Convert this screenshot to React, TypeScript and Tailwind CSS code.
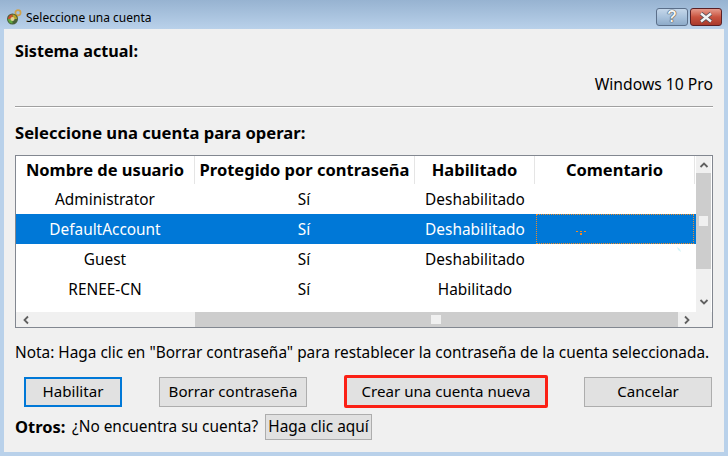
const rows = [
  { name: "Administrator", prot: "Sí", state: "Deshabilitado" },
  { name: "DefaultAccount", prot: "Sí", state: "Deshabilitado" },
  { name: "Guest", prot: "Sí", state: "Deshabilitado" },
  { name: "RENEE-CN", prot: "Sí", state: "Habilitado" }
];

function AppIcon() {
  return (
    <svg width="16" height="16" viewBox="0 0 16 16" className="shrink-0">
      <path d="M10.5 7 L10 11" stroke="#b98a34" strokeWidth="2" />
      <circle cx="12" cy="3.8" r="2.6" fill="none" stroke="#d0a24a" strokeWidth="1.7" />
      <circle cx="6.5" cy="10" r="5.5" fill="#47603a" />
      <path d="M6.5 5.5 A4.5 4.5 0 0 1 11 10 L6.5 10 Z" fill="#b9a22a" />
      <path d="M2 10 A4.5 4.5 0 0 1 6.5 5.5 L6.5 10 Z" fill="#c8502c" />
      <path d="M2 10 L6.5 10 L6.5 14.5 A4.5 4.5 0 0 1 2 10 Z" fill="#5fa83c" />
      <circle cx="6.5" cy="10" r="2" fill="#e0d49a" />
    </svg>
  );
}

function Chevron(props: { d: string }) {
  return (
    <svg width="10" height="10" viewBox="0 0 10 10">
      <path d={props.d} fill="none" stroke="#606060" strokeWidth="1.8" />
    </svg>
  );
}

function Btn(props: { label: string; className: string }) {
  return (
    <button className={"flex items-center justify-center whitespace-nowrap bg-[#e1e1e1] text-[15.1px] text-black " + props.className}>
      {props.label}
    </button>
  );
}

export default function App() {
  return (
    <div className="flex h-[456px] w-[728px] flex-col overflow-hidden bg-[#b9d1ea] bg-gradient-to-b from-[#97b3d1] to-[#b9d1ea] bg-[length:100%_29px] bg-no-repeat font-['Noto_Sans',sans-serif] text-black">
      <div className="flex h-[29px] shrink-0 pl-[6px] pr-[6px]">
        <div className="mt-[9px]">
          <AppIcon />
        </div>
        <span className="ml-[4px] mt-[9px] text-[12px] leading-[18px]">Seleccione una cuenta</span>
        <div className="ml-auto mt-[8px] flex gap-[2px]">
          <div className="flex h-[18px] w-[32px] items-center justify-center rounded-[3px] border border-[#5b6f8a] bg-gradient-to-b from-[#c5d7ea] via-[#a9c2dc] to-[#8eabc9] font-['Liberation_Sans',sans-serif] text-[16px] font-bold leading-none text-[#f4f4f4] [text-shadow:0_0_1px_#222,0_0_1px_#222]">
            ?
          </div>
          <div className="flex h-[18px] w-[32px] items-center justify-center rounded-[3px] border border-[#5a1f24] bg-gradient-to-b from-[#e59a8c] via-[#c9533f] to-[#a93a2c]">
            <svg width="16" height="11" viewBox="0 0 16 11">
              <path d="M3 1.5 L13 9.5 M13 1.5 L3 9.5" stroke="#4a4a55" strokeWidth="4" />
              <path d="M3 1.5 L13 9.5 M13 1.5 L3 9.5" stroke="#f2f2f2" strokeWidth="2.4" />
            </svg>
          </div>
        </div>
      </div>

      <div className="mx-[4px] mb-[4px] flex flex-1 flex-col bg-[#f0f0f0] pl-[11px] pr-[11px]">
        <div className="mt-[11px] text-[16.2px] font-bold leading-[22px]">Sistema actual:</div>
        <div className="mt-[11px] text-right text-[15.7px] leading-[22px]">Windows 10 Pro</div>
        <div className="mt-[11px] h-[2px] border-t border-b border-t-[#a0a0a0] border-b-white" />
        <div className="mt-[14px] text-[16.6px] font-bold leading-[22px]">Seleccione una cuenta para operar:</div>

        <div className="mt-[11px] flex h-[173px] flex-col border border-[#828790] bg-white">
          <div className="flex h-[156px]">
            <div className="w-[680px]">
              <div className="flex h-[28px] text-[16.5px] font-bold">
                <div className="flex w-[179px] items-center justify-center border-r border-[#e5e5e5]">Nombre de usuario</div>
                <div className="flex w-[220px] items-center justify-center whitespace-nowrap border-r border-[#e5e5e5]">Protegido por contraseña</div>
                <div className="flex w-[120px] items-center justify-center border-r border-[#e5e5e5]">Habilitado</div>
                <div className="flex w-[160px] items-center justify-center border-r border-[#e5e5e5]">Comentario</div>
              </div>
              {rows.map((r, i) => (
                <div key={r.name} className={i === 1 ? "flex h-[30px] bg-[#0078d7] text-[15.4px] text-white" : "flex h-[30px] text-[15.4px]"}>
                  <div className="flex w-[178px] items-center justify-center pt-[2px]">{r.name}</div>
                  <div className="flex w-[220px] items-center justify-center pt-[2px]">{r.prot}</div>
                  <div className="flex w-[122px] items-center justify-center pt-[2px]">{r.state}</div>
                  <div className="flex w-[158px]">
                    {i === 1 && (
                      <div className="flex h-full w-full items-center border border-dotted border-[#f08a24] pl-[39px] pt-[8px]">
                        <svg width="10" height="5" viewBox="0 0 10 5">
                          <path d="M0 0h2v1H0z M4 0h2v1H4z M8 0h2v1H8z M4 2h2v2H4z" fill="#f08a24" />
                        </svg>
                      </div>
                    )}
                    {i === 2 && (
                      <div className="ml-auto mr-[12px] mt-[3px]">
                        <svg width="5" height="5" viewBox="0 0 5 5">
                          <path d="M0 0 L3 2 L4 5 L1 3 Z" fill="#d4f4f8" />
                        </svg>
                      </div>
                    )}
                  </div>
                </div>
              ))}
            </div>
            <div className="flex w-[15px] flex-col items-center bg-[#f0f0f0]">
              <div className="flex h-[17px] items-center justify-center">
                <Chevron d="M1.5 7 L5 3.5 L8.5 7" />
              </div>
              <div className="flex h-[96px] w-full items-center justify-center bg-[#cdcdcd]">
                <div className="h-[10px] w-[9px] bg-[#f0f0f0]" />
              </div>
              <div className="mb-[2px] mt-auto flex h-[17px] items-center justify-center">
                <Chevron d="M1.5 3 L5 6.5 L8.5 3" />
              </div>
            </div>
          </div>
          <div className="flex h-[15px] bg-[#f0f0f0]">
            <div className="flex w-[179px] items-center pl-[5px]">
              <Chevron d="M7 1.5 L3.5 5 L7 8.5" />
            </div>
            <div className="flex h-full w-[483px] items-center bg-[#cdcdcd] pl-[236px]">
              <div className="h-[9px] w-[10px] bg-[#f0f0f0]" />
            </div>
            <div className="flex w-[18px] items-center justify-center">
              <Chevron d="M3 1.5 L6.5 5 L3 8.5" />
            </div>
          </div>
        </div>

        <div className="mt-[14px] whitespace-nowrap text-[15.4px] leading-[22px]">Nota: Haga clic en "Borrar contraseña" para restablecer la contraseña de la cuenta seleccionada.</div>

        <div className="mt-[11px] flex h-[33px] items-center pl-[9px]">
          <Btn label="Habilitar" className="h-[30px] w-[98px] border-2 border-[#0078d7]" />
          <Btn label="Borrar contraseña" className="ml-[37px] h-[30px] w-[148px] border border-[#adadad]" />
          <Btn label="Crear una cuenta nueva" className="ml-[37px] h-[33px] w-[204px] rounded-[2px] border-[3px] border-[#fb2015]" />
          <Btn label="Cancelar" className="ml-[36px] h-[30px] w-[128px] border border-[#adadad]" />
        </div>

        <div className="mt-[6px] flex h-[26px] items-center text-[15.4px]">
          <span className="w-[51px] whitespace-nowrap text-[16.5px] font-bold">Otros:</span>
          <span className="ml-[6px]">¿No encuentra su cuenta?</span>
          <button className="ml-[7px] h-[26px] w-[107px] whitespace-nowrap border border-[#adadad] bg-[#e1e1e1] text-[15.4px]">Haga clic aquí</button>
        </div>
      </div>
    </div>
  );
}
